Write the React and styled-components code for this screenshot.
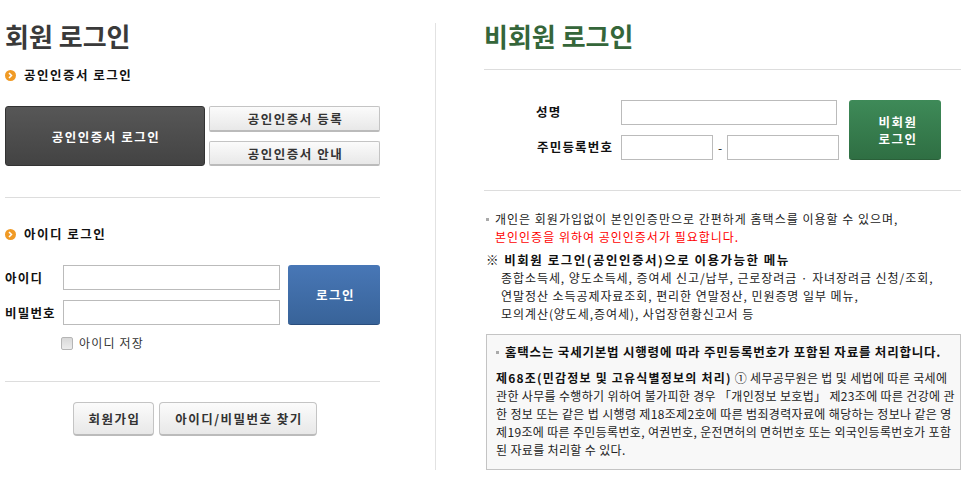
import React from 'react'
import styled, { createGlobalStyle } from 'styled-components'

const GlobalStyle = createGlobalStyle`
  html, body {
    margin: 0;
    padding: 0;
    background: #fff;
  }
  body {
    font-family: "Noto Sans CJK KR", "Liberation Sans", sans-serif;
    font-size: 12px;
    color: #000;
  }
`

const Page = styled.div`
  width: 973px;
  height: 501px;
  padding: 23px 0 0 5px;
  box-sizing: border-box;
  display: flex;
  align-items: flex-start;
  overflow: hidden;
`
const LeftColumn = styled.section`
  width: 375px;
  flex: none;
`
const Divider = styled.div`
  width: 1px;
  height: 447px;
  margin: 0 48px 0 55px;
  background: #e2e2e2;
  flex: none;
`
const RightColumn = styled.section`
  width: 477px;
  flex: none;
`
const Title = styled.h1`
  margin: 0;
  height: 26px;
  line-height: 25px;
  font-size: 26px;
  font-weight: 700;
  color: ${p => p.$color || '#3a3a3a'};
  white-space: nowrap;
`
const Rule = styled.hr`
  margin: ${p => p.$top}px 0 0;
  border: 0;
  height: 1px;
  background: #ddd;
`
const SectionHead = styled.h2`
  margin: ${p => p.$top}px 0 0;
  height: 14px;
  display: flex;
  align-items: center;
  gap: 8px;
  font-size: 12.5px;
  line-height: 14px;
  font-weight: 700;
  letter-spacing: 1.5px;
  color: #111;
  white-space: nowrap;
`
const CertRow = styled.div`
  margin-top: 24px;
  display: grid;
  grid-template-columns: 200px 171px;
  grid-template-rows: 26px 25px;
  row-gap: 9px;
  column-gap: 4px;
`
const Button = styled.button`
  padding: 0 0 0 2px;
  box-sizing: border-box;
  font-family: inherit;
  font-weight: 700;
  font-size: 12.5px;
  letter-spacing: 1.5px;
  cursor: pointer;
  white-space: nowrap;
`
const DarkButton = styled(Button)`
  grid-row: 1 / span 2;
  height: 60px;
  border: 1px solid #333;
  border-radius: 3px;
  background: linear-gradient(#575757, #434343);
  color: #fff;
`
const GreyButton = styled(Button)`
  border: 1px solid #c4c4c4;
  border-bottom: 2px solid #bbb;
  border-radius: 2px;
  background: linear-gradient(#fbfbfb, #e8e8e8);
  color: #333;
`
const ColorButton = styled(Button)`
  width: 92px;
  height: 60px;
  padding-left: ${p => p.$green ? 6 : 3}px;
  border: 0;
  border-radius: 3px;
  color: #fff;
  line-height: 17px;
  background: ${p => p.$green
    ? 'linear-gradient(#3e8a58, #2f6f43)'
    : 'linear-gradient(#4877b6, #386399)'};
  border-bottom: 1px solid ${p => p.$green ? '#2a6039' : '#2a4d7c'};
`
const LoginRow = styled.div`
  margin-top: 24px;
  display: flex;
  gap: 8px;
`
const Fields = styled.div`
  display: grid;
  grid-template-columns: 58px 217px;
  grid-template-rows: 25px 25px;
  row-gap: 10px;
  align-items: center;
`
const FieldLabel = styled.label`
  font-weight: 700;
  font-size: 12.5px;
  letter-spacing: 1.2px;
  color: #111;
  white-space: nowrap;
`
const TextInput = styled.input`
  box-sizing: border-box;
  width: ${p => p.$width}px;
  height: 25px;
  margin: 0;
  padding: 0 4px;
  border: 1px solid #bbb;
  border-radius: 0;
  background: #fff;
  outline: none;
`
const SaveRow = styled.label`
  margin: 11px 0 0 56px;
  height: 14px;
  display: flex;
  align-items: center;
  gap: 6px;
  font-size: 12px;
  line-height: 12px;
  letter-spacing: 1.2px;
  color: #333;
`
const SaveBox = styled.input`
  appearance: none;
  box-sizing: border-box;
  width: 12px;
  height: 13px;
  margin: 0;
  border: 1px solid #b5b5b5;
  border-radius: 2px;
  background: linear-gradient(#d8d8d8, #ececec);
`
const BottomButtons = styled.div`
  margin-top: 20px;
  padding-left: 68px;
  display: flex;
  gap: 5px;
`
const BottomButton = styled(GreyButton)`
  width: ${p => p.$width}px;
  height: 34px;
  border-radius: 4px;
`
const GuestForm = styled.div`
  margin: 30px 0 0 49px;
  display: flex;
  gap: 10px;
`
const GuestFields = styled.div`
  display: grid;
  grid-template-columns: 88px auto;
  grid-template-rows: 25px 25px;
  row-gap: 10px;
  align-items: center;
`
const GuestLabel = styled(FieldLabel)`
  padding: 0 0 2px ${p => p.$indent}px;
`
const IdInputs = styled.div`
  display: flex;
  align-items: center;
`
const Dash = styled.span`
  width: 14px;
  text-align: center;
  color: #222;
`
const Notes = styled.div`
  margin: 19px 0 0 2px;
  line-height: 18px;
  font-size: 12px;
  letter-spacing: 1px;
  color: #222;
  white-space: nowrap;
`
const Bullet = styled.i`
  display: inline-block;
  width: 3px;
  height: 3px;
  margin: 0 6px 2px 0;
  vertical-align: middle;
  background: #aaa;
`
const RedLine = styled.div`
  padding-left: 9px;
  color: #f00;
`
const MenuHead = styled.div`
  margin-top: 5px;
  font-weight: 700;
  font-size: 12.5px;
  letter-spacing: 1.5px;
  color: #111;
`
const MenuList = styled.div`
  padding-left: 15px;
  letter-spacing: 0.93px;
`
const NoticeBox = styled.div`
  box-sizing: border-box;
  height: 136px;
  margin: 11px 0 0 2px;
  padding: 8px 0 0 9px;
  border: 1px solid #c4c4c4;
  background: #f8f8f8;
  white-space: nowrap;
  font-size: 12px;
  letter-spacing: 0.34px;
  line-height: 18px;
  color: #222;
`
const NoticeHead = styled.div`
  font-weight: 700;
  font-size: 12.5px;
  letter-spacing: 0.8px;
  color: #111;
`
const NoticeBody = styled.div`
  margin-top: 8px;
`
const Strong = styled.b`
  font-weight: 700;
  color: #111;
  letter-spacing: 1.2px;
`

const ArrowIcon = () => (
  <svg width="11" height="11" viewBox="0 0 11 11" style={{ flex: 'none' }}>
    <circle cx="5.5" cy="5.5" r="5.5" fill="#f09a25" />
    <path d="M4 3 L6.5 5.5 L4 8" fill="none" stroke="#fff" strokeWidth="1.5" />
  </svg>
)

export default function App() {
  return (
    <Page>
      <GlobalStyle />
      <LeftColumn>
        <Title>회원 로그인</Title>
        <SectionHead $top={19}><ArrowIcon />공인인증서 로그인</SectionHead>
        <CertRow>
          <DarkButton>공인인증서 로그인</DarkButton>
          <GreyButton>공인인증서 등록</GreyButton>
          <GreyButton>공인인증서 안내</GreyButton>
        </CertRow>
        <Rule $top={31} />
        <SectionHead $top={29}><ArrowIcon />아이디 로그인</SectionHead>
        <LoginRow>
          <Fields>
            <FieldLabel>아이디</FieldLabel>
            <TextInput $width={217} />
            <FieldLabel>비밀번호</FieldLabel>
            <TextInput $width={217} type="password" />
          </Fields>
          <ColorButton>로그인</ColorButton>
        </LoginRow>
        <SaveRow><SaveBox type="checkbox" />아이디 저장</SaveRow>
        <Rule $top={31} />
        <BottomButtons>
          <BottomButton $width={81}>회원가입</BottomButton>
          <BottomButton $width={158}>아이디/비밀번호 찾기</BottomButton>
        </BottomButtons>
      </LeftColumn>
      <Divider />
      <RightColumn>
        <Title $color="#35663a">비회원 로그인</Title>
        <Rule $top={20} />
        <GuestForm>
          <GuestFields>
            <GuestLabel $indent={3}>성명</GuestLabel>
            <TextInput $width={216} />
            <GuestLabel $indent={4}>주민등록번호</GuestLabel>
            <IdInputs>
              <TextInput $width={92} />
              <Dash>-</Dash>
              <TextInput $width={112} />
            </IdInputs>
          </GuestFields>
          <ColorButton $green>비회원<br />로그인</ColorButton>
        </GuestForm>
        <Rule $top={30} />
        <Notes>
          <div><Bullet />개인은 회원가입없이 본인인증만으로 간편하게 홈택스를 이용할 수 있으며,</div>
          <RedLine>본인인증을 위하여 공인인증서가 필요합니다.</RedLine>
          <MenuHead>※ 비회원 로그인(공인인증서)으로 이용가능한 메뉴</MenuHead>
          <MenuList>
            종합소득세, 양도소득세, 증여세 신고/납부, 근로장려금 · 자녀장려금 신청/조회,<br />
            연말정산 소득공제자료조회, 편리한 연말정산, 민원증명 일부 메뉴,<br />
            모의계산(양도세,증여세), 사업장현황신고서 등
          </MenuList>
        </Notes>
        <NoticeBox>
          <NoticeHead><Bullet />홈택스는 국세기본법 시행령에 따라 주민등록번호가 포함된 자료를 처리합니다.</NoticeHead>
          <NoticeBody>
            <Strong>제68조(민감정보 및 고유식별정보의 처리)</Strong> ① 세무공무원은 법 및 세법에 따른 국세에<br />
            관한 사무를 수행하기 위하여 불가피한 경우 「개인정보 보호법」 제23조에 따른 건강에 관<br />
            한 정보 또는 같은 법 시행령 제18조제2호에 따른 범죄경력자료에 해당하는 정보나 같은 영<br />
            제19조에 따른 주민등록번호, 여권번호, 운전면허의 면허번호 또는 외국인등록번호가 포함<br />
            된 자료를 처리할 수 있다.
          </NoticeBody>
        </NoticeBox>
      </RightColumn>
    </Page>
  )
}
